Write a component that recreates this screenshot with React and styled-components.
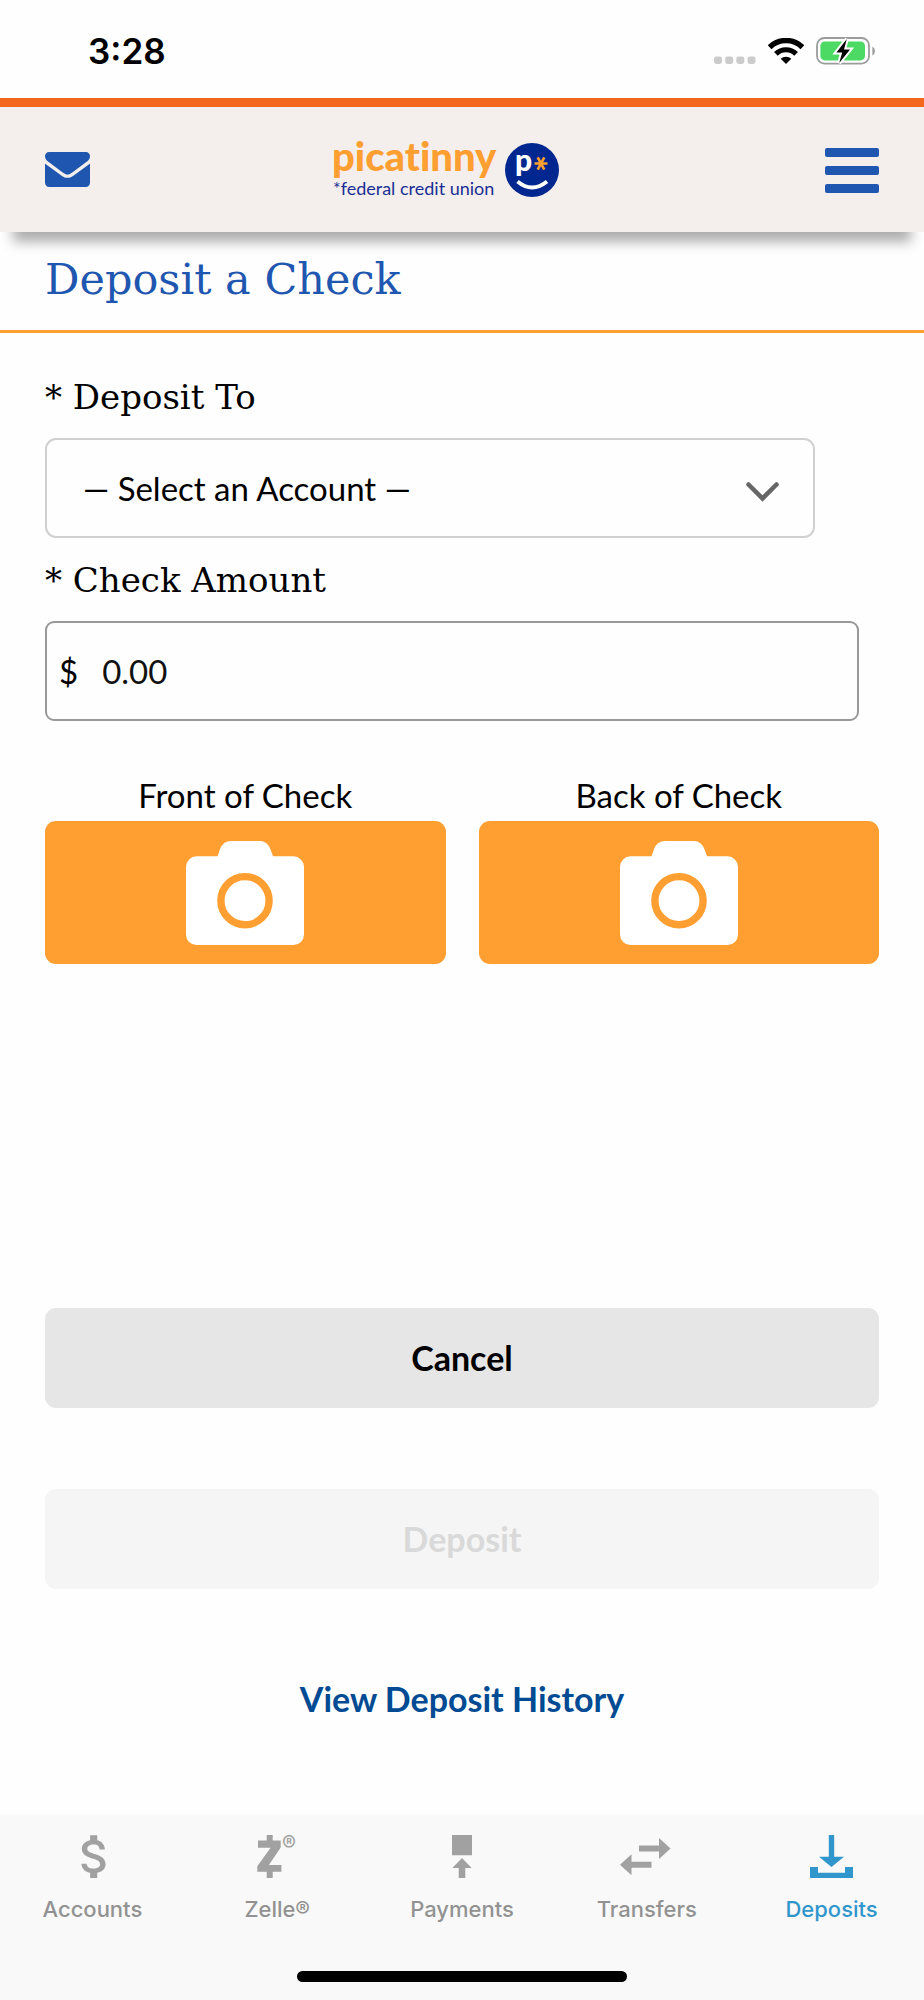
import React, { useState } from "react";
import styled, { createGlobalStyle } from "styled-components";
import { MdAttachMoney } from "react-icons/md";

const GlobalStyle = createGlobalStyle`
	* {
		box-sizing: border-box;
	}

	body {
		margin: 0;
		background: #fefefe;
		color: #000;
		font-family: Lato, "Open Sans", sans-serif;
		font-size: 33px;
		line-height: 40px;
	}
`

const Page = styled.div`
	display: flex;
	flex-direction: column;
	min-height: 100vh;
`

const StatusBar = styled.div`
	display: flex;
	align-items: center;
	justify-content: space-between;
	height: 98px;
	padding: 3px 48px 0 88px;
	font-family: Inter, sans-serif;
	font-size: 35px;
	font-weight: 600;
`

const StatusIcons = styled.div`
	display: flex;
	align-items: center;
	gap: 12px;

	svg {
		display: block;
	}
`

const Header = styled.header`
	display: grid;
	grid-template-columns: 1fr auto 1fr;
	align-items: center;
	height: 134px;
	padding: 0 45px;
	border-top: 9px solid #f4661a;
	background: #f4eeec;
	box-shadow: 0 23px 12px -13px rgba(0, 0, 0, 0.32);
`

const IconButton = styled.button`
	display: flex;
	justify-self: ${props => props.$side};
	padding: 0;
	border: 0;
	background: none;
	color: #1f57b0;
	cursor: pointer;
`

const TitleBar = styled.div`
	padding: 19px 45px 23px;
	border-bottom: 3px solid #ff9e31;
`

const Title = styled.h1`
	margin: 0;
	color: #1f57b0;
	font-family: "DejaVu Serif", serif;
	font-size: 43px;
	font-weight: 400;
	line-height: 56px;
`

const Main = styled.main`
	flex: 1;
`

const Form = styled.form`
	display: flex;
	flex-direction: column;
	padding: 42px 45px;
`

const Field = styled.div`
	display: flex;
	flex-direction: column;
	gap: 19px;
	margin-bottom: 20px;
	padding-right: ${props => props.$inset};
`

const Label = styled.label`
	font-family: "DejaVu Serif", serif;
	font-size: 34px;
	line-height: 44px;
`

const SelectBox = styled.div`
	position: relative;

	svg {
		position: absolute;
		top: 44px;
		right: 36px;
		pointer-events: none;
	}
`

const Select = styled.select`
	display: block;
	width: 100%;
	height: 100px;
	padding: 0 80px 0 36px;
	border: 2px solid #d0d0d0;
	border-radius: 11px;
	appearance: none;
	background: #fefefe;
	color: #000;
	font: inherit;
`

const AmountBox = styled.div`
	display: flex;
	align-items: center;
	gap: 24px;
	height: 100px;
	padding: 0 12px;
	border: 2px solid #999;
	border-radius: 9px;
`

const AmountInput = styled.input`
	flex: 1;
	min-width: 0;
	padding: 0;
	border: 0;
	outline: 0;
	background: none;
	color: #111;
	font: inherit;
`

const Photos = styled.div`
	display: grid;
	grid-template-columns: 1fr 1fr;
	gap: 33px;
	margin-top: 34px;
`

const Photo = styled.div`
	display: flex;
	flex-direction: column;
	gap: 6px;
	text-align: center;
`

const PhotoButton = styled.button`
	display: flex;
	align-items: center;
	justify-content: center;
	height: 143px;
	padding: 0;
	border: 0;
	border-radius: 11px;
	background: #ff9e31;
	cursor: pointer;
`

const Actions = styled.div`
	display: flex;
	flex-direction: column;
	gap: 81px;
	margin-top: 344px;
`

const ActionButton = styled.button`
	height: 100px;
	border: 0;
	border-radius: 11px;
	background: #e6e6e6;
	color: #000;
	font: inherit;
	font-size: 34px;
	font-weight: 700;
	cursor: pointer;

	&:disabled {
		background: #f5f5f5;
		color: #d9d9d9;
		cursor: default;
	}
`

const HistoryLink = styled.a`
	align-self: center;
	margin-top: 90px;
	color: #004b93;
	font-size: 34px;
	font-weight: 700;
	text-decoration: none;
`

const TabBar = styled.footer`
	padding: 21px 0 18px;
	background: #f9f9f9;
`

const Tabs = styled.nav`
	display: flex;
`

const Tab = styled.a`
	display: flex;
	flex: 1;
	flex-direction: column;
	align-items: center;
	gap: 17px;
	color: ${props => props.$active ? "#3096cc" : "#929292"};
	font-family: Inter, sans-serif;
	font-size: 22px;
	font-weight: 500;
	line-height: 28px;
	text-decoration: none;
`

const TabIcon = styled.span`
	display: flex;
	align-items: center;
	justify-content: center;
	height: 43px;
	color: ${props => props.$active ? "#3096cc" : "#a1a1a1"};
`

const HomeIndicator = styled.div`
	width: 330px;
	height: 11px;
	margin: 48px auto 0;
	border-radius: 6px;
	background: #000;
`

function SignalDots() {
	return (
		<svg width="42" height="26" viewBox="0 0 42 26" fill="#cbcbcb">
			<rect x="0" y="18.5" width="8" height="7.5" rx="2.4" />
			<rect x="11.2" y="18.5" width="8" height="7.5" rx="2.4" />
			<rect x="22.3" y="18.5" width="8" height="7.5" rx="2.4" />
			<rect x="33.5" y="18.5" width="8" height="7.5" rx="2.4" />
		</svg>
	);
}

function Wifi() {
	return (
		<svg width="36" height="26" viewBox="0 0 36 26">
			<path d="M1.6 9.2a23.4 23.4 0 0 1 32.8 0" fill="none" stroke="#000" strokeWidth="5.4" />
			<path d="M7.9 15.9a14.4 14.4 0 0 1 20.2 0" fill="none" stroke="#000" strokeWidth="5.2" />
			<path d="M18 26l-5.3-5.2a7.8 7.8 0 0 1 10.6 0z" />
		</svg>
	);
}

function Battery() {
	return (
		<svg width="60" height="28" viewBox="0 0 60 28">
			<rect x="1" y="1" width="52" height="25.6" rx="7.5" fill="none" stroke="#9c9c9c" strokeWidth="1.8" />
			<rect x="4.4" y="4.4" width="44.6" height="19" rx="4.5" fill="#4cd964" />
			<path d="M56.4 9.4q2.6 1.6 2.6 4.5t-2.6 4.5z" fill="#9c9c9c" />
			<path d="M30.8 2L20.4 15.4h5.8L23.2 26l10.8-13.4h-6z" fill="#000" stroke="#fff" strokeWidth="4" strokeLinejoin="miter" />
			<path d="M30.8 2L20.4 15.4h5.8L23.2 26l10.8-13.4h-6z" fill="#000" />
		</svg>
	);
}

function Envelope() {
	return (
		<svg width="45" height="35" viewBox="0 0 45 35" fill="currentColor">
			<path d="M4.3 0h36.4A4.2 4.2 0 0 1 45 4.3c0 2-1.2 4-3 5.3L27.6 20.2c-1.6 1.1-3.4 2.4-5.1 2.4s-3.5-1.3-5.1-2.4L3 9.6C1.3 8.3 0 6.3 0 4.3A4.2 4.2 0 0 1 4.3 0z" />
			<path d="M0 11.5c.5.6 1.2 1.1 1.9 1.6L17 23.9c1.6 1.2 3.5 1.9 5.5 1.9s3.9-.7 5.5-1.9l15.1-10.8c.7-.5 1.4-1 1.9-1.6v19.3a4.2 4.2 0 0 1-4.2 4.2H4.2A4.2 4.2 0 0 1 0 30.8z" />
		</svg>
	);
}

function Bars() {
	return (
		<svg width="54" height="47" viewBox="0 -2 54 47" fill="currentColor">
			<rect y="0" width="54" height="9" rx="2" />
			<rect y="18" width="54" height="9" rx="2" />
			<rect y="36" width="54" height="9" rx="2" />
		</svg>
	);
}

const Wordmark = styled.text`
	fill: #ff9e31;
	font-family: Lato, sans-serif;
	font-size: 40px;
	font-weight: 900;
	font-variant-ligatures: none;
`

function Logo() {
	return (
		<svg width="266" height="78" viewBox="-4 -8 266 78" role="img" aria-label="Picatinny Federal Credit Union">
			<Wordmark x="-1" y="32">picatinny</Wordmark>
			<text x="0" y="56" fill="#1a2f94" fontFamily="Lato" fontSize="18">*federal credit union</text>
			<circle cx="199" cy="31" r="27" fill="#00278f" />
			<text x="182" y="32" fill="#fff" fontFamily="Lato" fontSize="30" fontWeight="900">p</text>
			<path d="M201.5 24.5h13M204.7 18.3l6.6 12.4M211.3 18.3l-6.6 12.4" stroke="#ff9e31" strokeWidth="2.6" />
			<path d="M184.5 42.5q14.5 12 29.5 0" fill="none" stroke="#fff" strokeWidth="3.8" />
		</svg>
	);
}

function Chevron() {
	return (
		<svg width="33" height="20" viewBox="0 0 33 20" fill="none" stroke="#666" strokeWidth="4.5" strokeLinecap="round">
			<path d="M2.5 2.5l14 14 14-14" />
		</svg>
	);
}

function Camera() {
	return (
		<svg width="118" height="104" viewBox="0 0 118 104">
			<path
				d="M10.5 15.3H31.5L34 8.2Q37 0 45 0H74Q81 0 84.5 8.2L87 15.3H107.5A10.5 10.5 0 0 1 118 25.8V93.5A10.5 10.5 0 0 1 107.5 104H10.5A10.5 10.5 0 0 1 0 93.5V25.8A10.5 10.5 0 0 1 10.5 15.3z"
				fill="#fff"
			/>
			<circle cx="59" cy="59.7" r="24.1" fill="none" stroke="#ff9e31" strokeWidth="7.4" />
		</svg>
	);
}

function Zelle() {
	return (
		<svg width="42" height="63" viewBox="0 -10 42 63" fill="currentColor">
			<path d="M10.7 0h6v5.6h8v6.8L12.9 30h12.5v6.8h-8.700V43h-6v-6.200H1.300v-5.600L14.600 12.800H2V5.600h8.700z" />
			<text x="26" y="16" fontFamily="Inter" fontSize="21">®</text>
		</svg>
	);
}

function Payments() {
	return (
		<svg width="20" height="43" viewBox="0 0 20 43" fill="currentColor">
			<path d="M0 0h20v20.3H0zM10 23l9.7 10H13.300v10H6.700V33H.3z" />
		</svg>
	);
}

function Transfers() {
	return (
		<svg width="56" height="43" viewBox="0 0 56 43" fill="currentColor">
			<path d="M20 10.5h20V3l11.5 10.5L40 24v-7.5H20zM32.5 26.7h-20v-7.5L1 29.700l11.500 10.500v-7.500h20z" />
		</svg>
	);
}

function Deposits() {
	return (
		<svg width="43" height="43" viewBox="0 0 43 43" fill="currentColor">
			<path d="M18.8 0h5.4v21.7H34L21.5 32 9 21.7h9.800z" />
			<path d="M0 32h8v5.800h27V32h8v11H0z" />
		</svg>
	);
}

const tabs = [
	{ name: "Accounts", icon: <MdAttachMoney size={57} viewBox="-1 0 24 24" /> },
	{ name: "Zelle®", icon: <Zelle /> },
	{ name: "Payments", icon: <Payments /> },
	{ name: "Transfers", icon: <Transfers /> },
	{ name: "Deposits", icon: <Deposits />, active: true },
];

function App() {
	const [amount, setAmount] = useState("0.00");

	return (
		<Page>
			<GlobalStyle />
			<StatusBar>
				<span>3:28</span>
				<StatusIcons>
					<SignalDots />
					<Wifi />
					<Battery />
				</StatusIcons>
			</StatusBar>
			<Header>
				<IconButton $side="start" aria-label="Messages"><Envelope /></IconButton>
				<Logo />
				<IconButton $side="end" aria-label="Menu"><Bars /></IconButton>
			</Header>
			<Main>
				<TitleBar>
					<Title>Deposit a Check</Title>
				</TitleBar>
				<Form onSubmit={e => e.preventDefault()}>
					<Field $inset="64px">
						<Label htmlFor="account">* Deposit To</Label>
						<SelectBox>
							<Select id="account">
								<option>— Select an Account —</option>
							</Select>
							<Chevron />
						</SelectBox>
					</Field>
					<Field $inset="20px">
						<Label htmlFor="amount">* Check Amount</Label>
						<AmountBox>
							<span>$</span>
							<AmountInput id="amount" inputMode="decimal" value={amount} onChange={e => setAmount(e.target.value)} />
						</AmountBox>
					</Field>
					<Photos>
						<Photo>
							<span id="front">Front of Check</span>
							<PhotoButton type="button" aria-labelledby="front"><Camera /></PhotoButton>
						</Photo>
						<Photo>
							<span id="back">Back of Check</span>
							<PhotoButton type="button" aria-labelledby="back"><Camera /></PhotoButton>
						</Photo>
					</Photos>
					<Actions>
						<ActionButton type="button">Cancel</ActionButton>
						<ActionButton type="submit" disabled>Deposit</ActionButton>
					</Actions>
					<HistoryLink href="#history">View Deposit History</HistoryLink>
				</Form>
			</Main>
			<TabBar>
				<Tabs>
					{tabs.map(tab => (
						<Tab key={tab.name} href="#" $active={tab.active}>
							<TabIcon $active={tab.active}>{tab.icon}</TabIcon>
							{tab.name}
						</Tab>
					))}
				</Tabs>
				<HomeIndicator />
			</TabBar>
		</Page>
	);
}

export default App;
